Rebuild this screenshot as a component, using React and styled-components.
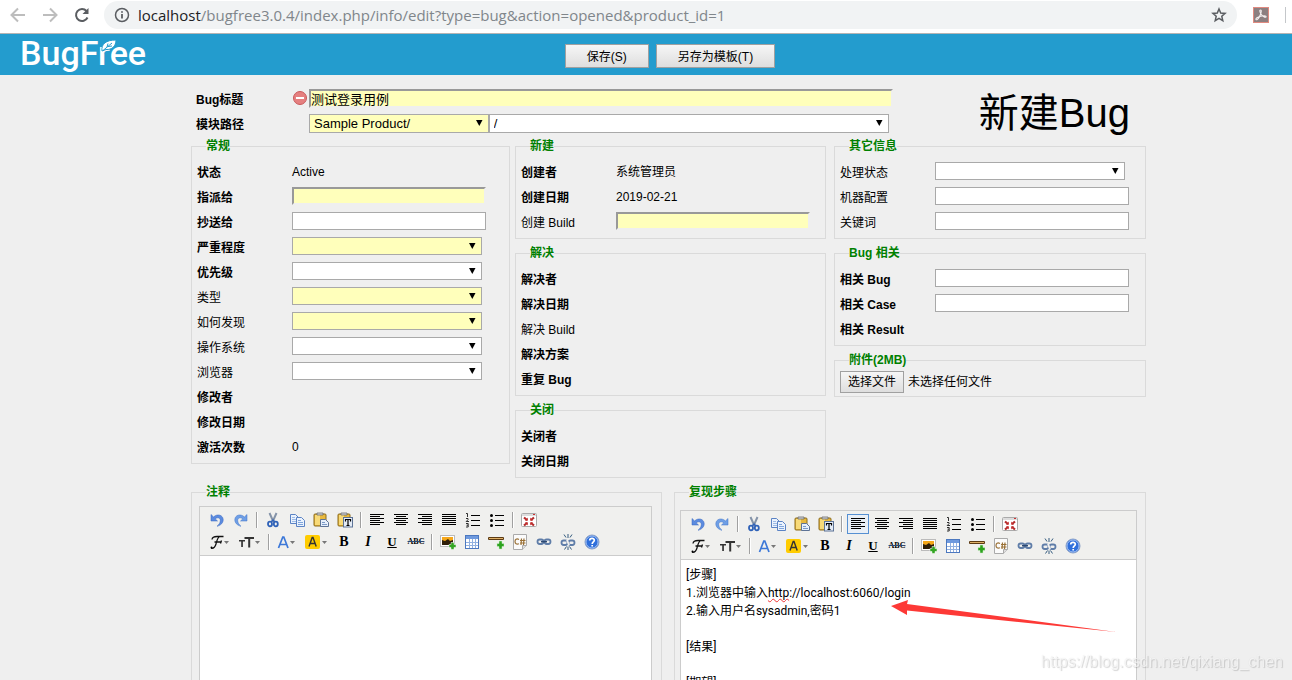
import React from 'react';
import styled, { createGlobalStyle, css } from 'styled-components';

const GlobalStyle = createGlobalStyle`
  *, *::before, *::after { box-sizing: border-box; }
  body {
    margin: 0;
    background: #efefef;
    color: #000;
    font: 12px/14px "Liberation Sans", "Noto Sans CJK SC", sans-serif;
  }
  button, input, select { font-family: inherit; color: inherit; }
`;

const Window = styled.div`
  height: 100vh;
  display: flex;
  flex-direction: column;
  overflow: hidden;
`;

/* browser bar */

const BrowserBar = styled.nav`
  flex: none;
  display: flex;
  align-items: center;
  height: 34px;
  padding: 1px 6px 4px 8px;
  background: #fff;
  border-bottom: 1px solid #b4b4b4;
`;

const NavButton = styled.button`
  width: 32px;
  height: 28px;
  padding: 0 0 0 2px;
  border: 0;
  background: none;
  display: flex;
  align-items: center;
  color: ${(p) => (p.$dim ? '#bdbdbd' : '#5a5d61')};
`;

const AddressPill = styled.div`
  flex: 1;
  min-width: 0;
  display: flex;
  align-items: center;
  height: 28px;
  padding: 0 10px;
  border-radius: 14px;
  background: #f1f3f4;
  color: #5a5d61;
  svg { flex: none; }
`;

const Address = styled.span`
  flex: 1;
  min-width: 0;
  margin-left: 8px;
  overflow: hidden;
  white-space: nowrap;
  font: 15px/24px "Open Sans", "Noto Sans", sans-serif;
  color: #80868b;
  b { font-weight: 400; color: #202124; }
`;

const Extension = styled.div`
  display: flex;
  align-items: center;
  gap: 16px;
  margin-left: 16px;
`;

const BarDivider = styled.span`
  width: 1px;
  height: 16px;
  background: #c4c7ca;
`;

/* header */

const Header = styled.header`
  flex: none;
  display: grid;
  grid-template-columns: minmax(0, 564fr) auto minmax(0, 516fr);
  align-items: center;
  height: 41px;
  background: #239cce;
`;

const Logo = styled.a`
  position: relative;
  justify-self: start;
  margin-left: 20px;
  padding-bottom: 3px;
  color: #fff;
  text-decoration: none;
  font: 500 34px/36px Roboto, sans-serif;
`;

const Leaf = styled.svg`
  position: absolute;
  left: 81px;
  top: 4px;
`;

const Actions = styled.div`
  display: flex;
  gap: 7px;
  margin-top: 3px;
`;

const ActionButton = styled.button`
  height: 24px;
  padding: 1px 21px 0;
  border: 1px solid #a0a0a0;
  border-radius: 0;
  background: linear-gradient(#f6f6f6, #dedede);
  font-size: 12px;
  line-height: 20px;
`;

/* form */

const Scroller = styled.main`
  flex: 1;
  min-height: 0;
  overflow-y: auto;
  scrollbar-width: none;
`;

const Form = styled.form`
  max-width: 1000px;
  margin: 0 auto;
  padding: 12px 0 24px 45px;
`;

const FormHead = styled.div`
  display: flex;
  padding: 0 16px 0 5px;
`;

const HeadFields = styled.div`
  flex: 1;
  min-width: 0;
`;

const HeadRow = styled.div`
  display: flex;
  align-items: flex-start;
  height: 25px;
`;

const HeadLabel = styled.label`
  flex: none;
  width: 97px;
  line-height: 27px;
  font-weight: 700;
`;

const StatusSlot = styled.span`
  flex: none;
  width: 16px;
  padding-top: 4px;
  line-height: 0;
`;

const PageTitle = styled.h1`
  margin: 0 0 0 86px;
  font-size: 40px;
  line-height: 52px;
  font-weight: 400;
  white-space: nowrap;
`;

const PathSelects = styled.div`
  flex: 1;
  display: flex;
  margin-right: 4px;
`;

const insetBorder = css`
  border: 2px solid;
  border-color: #999 #efefef #efefef #999;
  background: #ffffbb;
`;

const TextInput = styled.input`
  display: block;
  width: ${(p) => p.$width || '194px'};
  max-width: 100%;
  height: ${(p) => (p.$tall ? '19px' : '18px')};
  margin-top: 2px;
  padding: 0;
  border: 1px solid #a9a9a9;
  background: #fff;
  font-size: 13px;
  ${(p) => p.$required && insetBorder}
`;

const SelectBox = styled.span`
  position: relative;
  display: block;
  width: ${(p) => p.$width || '190px'};
  max-width: 100%;
  margin-top: 2px;
  select {
    display: block;
    width: 100%;
    height: ${(p) => (p.$tall ? '19px' : '18px')};
    padding: 0 20px 0 4px;
    appearance: none;
    border: 1px solid #a9a9a9;
    border-radius: 0;
    background: ${(p) => (p.$required ? '#ffffbb' : '#fff')};
    font-size: 13px;
  }
  svg {
    position: absolute;
    right: 6px;
    top: 5px;
    pointer-events: none;
  }
`;

const Columns = styled.div`
  display: grid;
  grid-template-columns: 319fr 311fr 315fr;
  column-gap: 5px;
  align-items: start;
`;

const Column = styled.div`
  min-width: 0;
  display: flex;
  flex-direction: column;
  gap: 7px;
  margin-left: ${(p) => (p.$last ? '3px' : '0')};
`;

const Panel = styled.fieldset`
  min-width: 0;
  margin: 0;
  padding: ${(p) => p.$pad || '7px 5px 3px'};
  border: 1px solid #dadada;
`;

const Legend = styled.legend`
  margin-left: ${(p) => p.$indent || '9px'};
  padding: 0;
  color: #008000;
  font-weight: 700;
  line-height: 14px;
`;

const Row = styled.div`
  display: flex;
  align-items: flex-start;
  height: 25px;
`;

const FieldLabel = styled.label`
  flex: none;
  width: 95px;
  line-height: 27px;
  font-weight: ${(p) => (p.$bold ? 700 : 400)};
`;

const Value = styled.output`
  line-height: 24px;
`;

const FileRow = styled.div`
  display: flex;
  align-items: center;
  gap: 4px;
  height: 23px;
  input {
    position: absolute;
    width: 1px;
    height: 1px;
    opacity: 0;
  }
`;

const FileButton = styled.label`
  height: 22px;
  padding: 0 7px;
  border: 1px solid #a0a0a0;
  background: linear-gradient(#f6f6f6, #dedede);
  line-height: 20px;
`;

/* editors */

const EditorGrid = styled.div`
  display: grid;
  grid-template-columns: 471fr 472fr;
  column-gap: 12px;
  margin-top: 7px;
`;

const EditorFrame = styled.div`
  position: relative;
  border: 1px solid #ccc;
  background: #fff;
`;

const Toolbar = styled.div`
  padding: 2px 5px;
  border-bottom: 1px solid #ccc;
  background: #f0f0ee;
`;

const ToolRow = styled.div`
  display: flex;
  align-items: center;
  height: 22px;
  overflow: hidden;
`;

const Tool = styled.button`
  flex: none;
  display: flex;
  align-items: center;
  justify-content: center;
  width: ${(p) => p.$width + 6}px;
  height: 20px;
  margin: 0 1px;
  padding: 0;
  border: 1px solid ${(p) => (p.$active ? '#5690d2' : 'transparent')};
  background: ${(p) => (p.$active ? '#e9eff6' : 'none')};
`;

const ToolDivider = styled.span`
  flex: none;
  width: 2px;
  height: 16px;
  margin: 0 3px;
  border-left: 1px solid #a0a0a0;
  border-right: 1px solid #fff;
`;

const EditorBody = styled.div`
  min-height: 200px;
  padding: 6px 5px;
  outline: 0;
  font: 12px/18px Roboto, "Noto Sans CJK SC", sans-serif;
  p { margin: 0; min-height: 18px; }
`;

const Misspelt = styled.span`
  text-decoration: underline wavy #e33 1px;
  text-underline-offset: 1px;
  text-decoration-skip-ink: none;
`;

const Pointer = styled.svg`
  position: absolute;
  left: 208px;
  top: 86px;
  pointer-events: none;
`;

const Watermark = styled.span`
  position: fixed;
  right: 9px;
  bottom: 8px;
  font: 16px/20px "Liberation Sans", sans-serif;
  color: rgba(255, 255, 255, 0.7);
  text-shadow: 1px 1px 1px rgba(0, 0, 0, 0.16), 0 0 1px rgba(0, 0, 0, 0.12);
  pointer-events: none;
`;

/* icons */

const lines = (rows) => rows.map(([x, w], i) => <rect key={i} x={x} y={2 + i * 2} width={w} height="1" />);
const Clipboard = () => (
  <>
    <rect x="1" y="2" width="12" height="12" rx="1" fill="#e9b93c" stroke="#8a6a1c" />
    <path d="M2 3h5v10H2z" fill="#f8da78" />
    <path d="M4 3V1h6v2z" fill="#d5d8de" stroke="#6b6b6b" strokeWidth=".8" />
  </>
);
const Caret = ({ x }) => <path d={`M${x} 7h5l-2.5 3z`} fill="#777" />;
const link = (
  <g fill="none" stroke="#5f7da8" strokeWidth="1.8">
    <rect x="1.5" y="5.5" width="6" height="4.5" rx="2.2" />
    <rect x="8.5" y="5.5" width="6" height="4.5" rx="2.2" />
  </g>
);

const GLYPHS = {
  undo: (
    <path d="M2 2.500V9h6.500L6.300 6.900C8.500 4.800 11.600 6 11.300 8.800 11.100 11 10 12.500 8 14.300c4-1 6.300-3.500 6.200-6.800C14 3 8.500 1.300 4.600 4.900z" fill="#5b8be0" stroke="#3565bd" strokeWidth=".5" />
  ),
  redo: (
    <path d="M14 2.500V9H7.500l2.200-2.100C7.500 4.800 4.400 6 4.700 8.800 4.900 11 6 12.500 8 14.300 4 13.300 1.700 10.800 1.800 7.500 2 3 7.500 1.300 11.400 4.900z" fill="#6f9fe6" stroke="#3f73c6" strokeWidth=".5" />
  ),
  cut: (
    <>
      <path d="M4.500 1l4 9M11.500 1l-4 9" stroke="#8493a8" strokeWidth="2" />
      <g fill="none" stroke="#2f62b8" strokeWidth="1.800">
        <ellipse cx="5" cy="12" rx="2" ry="2.300" />
        <ellipse cx="10.800" cy="12" rx="2" ry="2.300" />
      </g>
      <path d="M6 10l2-2 2 2" fill="none" stroke="#2f62b8" strokeWidth="1.500" />
    </>
  ),
  copy: (
    <g stroke="#5b83c4" fill="#eaf2fd">
      <path d="M1.500 2.500h5l3 3v6h-8z" />
      <path d="M3 5.500h3M3 7.500h4M3 9.500h4" stroke="#9dbbe6" />
      <path d="M7.500 5.500h5l3 3v6h-8z" />
      <path d="M9 8.500h3M9 10.500h5M9 12.500h5" stroke="#7fa5dc" />
    </g>
  ),
  paste: (
    <>
      <Clipboard />
      <path d="M7.500 7.500h5l3 3v4h-8z" fill="#e6effb" stroke="#5d7396" />
      <path d="M9 10.500h3M9 12.500h5" stroke="#7c9ac6" />
    </>
  ),
  plainpaste: (
    <>
      <Clipboard />
      <rect x="6.500" y="5.500" width="9" height="9.500" fill="#e3ebf6" stroke="#5d7396" />
      <path d="M8.500 9.500v-2h5v2M11 7.500v6M9.500 13.500h3" fill="none" stroke="#000" strokeWidth="1.200" />
    </>
  ),
  left: lines([[1, 14], [1, 10], [1, 14], [1, 10], [1, 14], [1, 10]]),
  center: lines([[1, 14], [3, 10], [1, 14], [3, 10], [1, 14], [3, 10]]),
  right: lines([[1, 14], [5, 10], [1, 14], [5, 10], [1, 14], [5, 10]]),
  full: lines([[1, 14], [1, 14], [1, 14], [1, 14], [1, 14], [1, 14]]),
  ol: (
    <>
      <path d="M6 3h9v1H6zM6 8h9v1H6zM6 13h9v1H6z" />
      <path d="M1 1.500h1.500V5M1 6.500h2v1.200L1.200 9.500H4M1 11.500h2.200v3.500H1M1.500 13.200h1.500" fill="none" stroke="#000" strokeWidth=".8" />
    </>
  ),
  ul: (
    <>
      <path d="M6 3h9v1H6zM6 8h9v1H6zM6 13h9v1H6z" />
      <circle cx="2.500" cy="3.500" r="1.500" /><circle cx="2.500" cy="8.500" r="1.500" /><circle cx="2.500" cy="13.500" r="1.500" />
    </>
  ),
  fullscreen: (
    <>
      <rect x=".5" y="1.500" width="15" height="13" rx="1" fill="#fff" stroke="#aaa" />
      <path d="M1 2h14v2H1z" fill="#ddd" /><path d="M12 2h2v1h-2z" fill="#c33" />
      <path d="M3 5.500l3 2.500M13 5.500L10 8M3 13.500l3-2.500M13 13.500l-3-2.500" stroke="#b52d2d" strokeWidth="2.200" />
      <path d="M6.800 5.500v3.200H4zM9.200 5.500v3.200H12zM6.800 13.500v-3.200H4zM9.200 13.500v-3.200H12z" fill="#c32d2d" />
    </>
  ),
  fontname: (
    <>
      <path d="M2 14.200c2.500.6 4-.9 5-4.200.9-3.200 1.500-6.500 3.500-7.500M3 5.500C3.300 3 5.500 2.500 8 2.500h6.500M5.500 8h6.500M12.500 6.500L11.500 9.500" fill="none" stroke="#111" strokeWidth="1.300" />
      <circle cx="2.500" cy="13.500" r="1" />
      <Caret x="15" />
    </>
  ),
  fontsize: (
    <>
      <path d="M1 6h6v1.500H4.900V13H3.200V7.500H1zM6.500 3H16v2h-3.800v8.500h-2V5H6.500z" fill="#333" />
      <Caret x="17" />
    </>
  ),
  forecolor: (
    <>
      <path d="M1.500 14L5.800 3h1L11 14M3 10.500h6.600" fill="none" stroke="#3c78d8" strokeWidth="1.700" />
      <Caret x="13" />
    </>
  ),
  hilite: (
    <>
      <rect x="0" y="1" width="15" height="14" rx="2" fill="#fc0" />
      <path d="M4 12.500l3.200-9H8l3.200 9M5 9.500h5.100" fill="none" stroke="#333" strokeWidth="1.400" />
      <Caret x="17" />
    </>
  ),
  image: (
    <>
      <rect x=".5" y="1.500" width="14" height="11" fill="#fff" stroke="#bbb" />
      <path d="M2 3h11v8H2z" fill="#2e1e08" />
      <path d="M2 3h11v3l-3 1-2-2-3 2-3-1z" fill="#f5a71a" />
      <path d="M11 8.500h3v2h2v3h-2v2h-3v-2H9v-3h2z" fill="#34a523" stroke="#fff" strokeWidth=".5" />
    </>
  ),
  table: (
    <>
      <rect x="1.500" y="1.500" width="13" height="13" fill="#fff" stroke="#4c78bf" />
      <path d="M2 2h12v3H2z" fill="#6f9ade" />
      <path d="M2 8.500h12M2 11.500h12M5.500 5v9M8.500 5v9M11.500 5v9" stroke="#92b1e0" />
    </>
  ),
  hr: (
    <>
      <rect x="0" y="3" width="16" height="3" rx="1" fill="#5d3b13" /><path d="M1 4h14v1H1z" fill="#dfb169" />
      <path d="M11 7h3v2.500h2v3h-2V15h-3v-2.500H9v-3h2z" fill="#2da31f" stroke="#d5efcf" strokeWidth=".5" />
    </>
  ),
  code: (
    <>
      <path d="M1.500.5h13v11l-4 4h-9z" fill="#fbfbfb" stroke="#aaa" /><path d="M14.500 11.500h-4v4" fill="#ddd" stroke="#aaa" />
      <path d="M7 5.500C4.500 4.200 3 5.500 3 7.500s1.500 3.300 4 2.200M9.500 4.500L9 11M12 4.500L11.500 11M8 6.500h5.500M8 9h5.500" fill="none" stroke="#9a7136" strokeWidth="1.200" />
    </>
  ),
  link: <>{link}<path d="M5 7.700h6" stroke="#2d4a73" strokeWidth="1.500" /></>,
  unlink: (
    <>
      <g transform="translate(0 1)">{link}</g>
      <path d="M7 6l2 5" stroke="#f0f0ee" strokeWidth="2" />
      <path d="M8 0v4M4 .5l2 3M12 .5l-2 3M8 12.500V16M4.500 15.500l2-3M11.500 15.500l-2-3" stroke="#345b7e" strokeWidth="1" />
    </>
  ),
  help: (
    <>
      <circle cx="8" cy="8" r="7" fill="#2f6fdb" stroke="#8a9fc4" /><circle cx="8" cy="8" r="6" fill="none" stroke="#b9d0f7" strokeWidth=".8" />
      <path d="M5.700 6.500C5.700 3.500 10.500 3.600 10.300 6.400 10.200 8 8.200 7.800 8.200 10M8.200 11v1.500" fill="none" stroke="#fff" strokeWidth="1.700" />
    </>
  ),
};

const Letter = styled.span`
  font: 700 ${(p) => p.$size || 13}px/16px "Liberation Serif", serif;
  font-style: ${(p) => (p.$italic ? 'italic' : 'normal')};
  text-decoration: ${(p) => p.$line || 'none'};
`;

const LETTERS = {
  bold: <Letter $size={14}>B</Letter>,
  italic: <Letter $size={14} $italic>I</Letter>,
  underline: <Letter $line="underline">U</Letter>,
  strike: <Letter $size={8} $line="line-through #2d4a73">ABC</Letter>,
};

const TOOLS = [
  [['undo', '后退'], ['redo', '前进'], null, ['cut', '剪切'], ['copy', '复制'], ['paste', '粘贴'], ['plainpaste', '粘贴为无格式文本'], null,
    ['left', '左对齐'], ['center', '居中'], ['right', '右对齐'], ['full', '两端对齐'], ['ol', '编号'], ['ul', '项目符号'], null, ['fullscreen', '全屏显示']],
  [['fontname', '字体', 21], ['fontsize', '文字大小', 23], null, ['forecolor', '文字颜色', 20], ['hilite', '文字背景', 23],
    ['bold', '粗体'], ['italic', '斜体'], ['underline', '下划线'], ['strike', '删除线'], null,
    ['image', '图片'], ['table', '表格'], ['hr', '横线'], ['code', '程序代码'], ['link', '超级链接'], ['unlink', '取消超级链接'], ['help', '关于']],
];

function Editor({ label, active, children }) {
  return (
    <EditorFrame>
      <Toolbar role="toolbar" aria-label={label}>
        {TOOLS.map((row, i) => (
          <ToolRow key={i}>
            {row.map((tool, j) => {
              if (!tool) return <ToolDivider key={j} />;
              const [name, title, width = 16] = tool;
              return (
                <Tool key={j} type="button" aria-label={title} title={title} $width={width} $active={active === name}>
                  {LETTERS[name] || <svg width={width} height="16" viewBox={`0 0 ${width} 16`}>{GLYPHS[name]}</svg>}
                </Tool>
              );
            })}
          </ToolRow>
        ))}
      </Toolbar>
      <EditorBody role="textbox" aria-multiline="true" aria-label={label} contentEditable suppressContentEditableWarning spellCheck={false}>
        {children}
      </EditorBody>
      {active && (
        <Pointer width="230" height="36" viewBox="0 0 230 36" aria-hidden="true">
          <path d="M2 9L19 3 18 7 227 35 18 13.500V18z" fill="#fd3936" />
        </Pointer>
      )}
    </EditorFrame>
  );
}

function Select({ id, options = [''], label, ...rest }) {
  return (
    <SelectBox {...rest}>
      <select id={id} aria-label={label}>
        {options.map((o) => <option key={o}>{o}</option>)}
      </select>
      <svg width="8" height="8" viewBox="0 0 8 8" aria-hidden="true"><path d="M1 1h6.500L4.300 7z" /></svg>
    </SelectBox>
  );
}

function Field({ id, label, bold, kind, required, value }) {
  return (
    <Row>
      <FieldLabel htmlFor={kind || value ? id : undefined} $bold={bold}>{label}</FieldLabel>
      {kind === 'text' && <TextInput id={id} $required={required} />}
      {kind === 'select' && <Select id={id} $required={required} />}
      {value && <Value id={id}>{value}</Value>}
    </Row>
  );
}

function Group({ title, fields }) {
  return (
    <Panel>
      <Legend>{title}</Legend>
      {fields.map((f) => <Field key={f.id} {...f} />)}
    </Panel>
  );
}

const GENERAL = [
  { id: 'status', label: '状态', bold: true, value: 'Active' },
  { id: 'assign', label: '指派给', bold: true, kind: 'text', required: true },
  { id: 'cc', label: '抄送给', bold: true, kind: 'text' },
  { id: 'severity', label: '严重程度', bold: true, kind: 'select', required: true },
  { id: 'priority', label: '优先级', bold: true, kind: 'select' },
  { id: 'type', label: '类型', kind: 'select', required: true },
  { id: 'found', label: '如何发现', kind: 'select', required: true },
  { id: 'os', label: '操作系统', kind: 'select' },
  { id: 'browser', label: '浏览器', kind: 'select' },
  { id: 'modifier', label: '修改者', bold: true },
  { id: 'modified', label: '修改日期', bold: true },
  { id: 'reopened', label: '激活次数', bold: true, value: '0' },
];
const CREATED = [
  { id: 'creator', label: '创建者', bold: true, value: '系统管理员' },
  { id: 'created', label: '创建日期', bold: true, value: '2019-02-21' },
  { id: 'build', label: '创建 Build', kind: 'text', required: true },
];
const RESOLVED = [
  { id: 'resolver', label: '解决者', bold: true },
  { id: 'resolved', label: '解决日期', bold: true },
  { id: 'rbuild', label: '解决 Build' },
  { id: 'solution', label: '解决方案', bold: true },
  { id: 'duplicate', label: '重复 Bug', bold: true },
];
const CLOSED = [
  { id: 'closer', label: '关闭者', bold: true },
  { id: 'closed', label: '关闭日期', bold: true },
];
const OTHER = [
  { id: 'handling', label: '处理状态', kind: 'select' },
  { id: 'machine', label: '机器配置', kind: 'text' },
  { id: 'keywords', label: '关键词', kind: 'text' },
];
const RELATED = [
  { id: 'rbug', label: '相关 Bug', bold: true, kind: 'text' },
  { id: 'rcase', label: '相关 Case', bold: true, kind: 'text' },
  { id: 'rresult', label: '相关 Result', bold: true },
];

export default function App() {
  return (
    <Window>
      <GlobalStyle />
      <BrowserBar>
        <NavButton $dim aria-label="Back">
          <svg width="16" height="16" fill="none" stroke="currentColor" strokeWidth="2"><path d="M15 8H2M8 1.500L1.500 8 8 14.500" /></svg>
        </NavButton>
        <NavButton $dim aria-label="Forward">
          <svg width="16" height="16" fill="none" stroke="currentColor" strokeWidth="2"><path d="M1 8h13M8 1.500L14.500 8 8 14.500" /></svg>
        </NavButton>
        <NavButton aria-label="Reload">
          <svg width="16" height="16" fill="none" stroke="currentColor" strokeWidth="2"><path d="M13.500 10.500A6 6 0 1 1 12.500 4" /><path d="M14.500 1v6h-6z" fill="currentColor" stroke="none" /></svg>
        </NavButton>
        <AddressPill>
          <svg width="16" height="16" fill="none" stroke="currentColor" strokeWidth="1.500"><circle cx="8" cy="8" r="6.500" /><path d="M8 7v4.500M8 4.200v1.600" strokeWidth="1.800" /></svg>
          <Address><b>localhost</b>/bugfree3.0.4/index.php/info/edit?type=bug&amp;action=opened&amp;product_id=1</Address>
          <svg width="16" height="16" fill="none" stroke="currentColor" strokeWidth="1.500"><path d="M8 2l1.700 4 4.400.4-3.300 2.900 1 4.300L8 11.300l-3.800 2.300 1-4.300L1.900 6.400 6.300 6z" /></svg>
        </AddressPill>
        <Extension>
          <svg width="16" height="16"><rect x=".5" y=".5" width="15" height="15" fill="#8c7f80" stroke="#e08a80" /><path d="M7.500 3c1.500 0 .5 3-.5 5.500S4 13.500 3 12.500 6 9.500 9 9s4.500 0 4 1-3.500-.5-5-3S6.500 3 7.500 3z" fill="none" stroke="#f4eeee" strokeWidth="1.100" /></svg>
          <BarDivider />
        </Extension>
      </BrowserBar>

      <Header>
        <Logo href="#">
          BugFree
          <Leaf width="16" height="13" viewBox="0 0 16 13" aria-hidden="true">
            <path d="M1 12C0 5 5 1 15 1c0 6-4 10-10 9.500z" fill="#fff" stroke="#239cce" />
            <path d="M2 11.500L11 4M6 8l1-3.500M7 7.500l4-.5" fill="none" stroke="#239cce" strokeWidth="1" />
          </Leaf>
        </Logo>
        <Actions>
          <ActionButton type="submit" form="bug-form">保存(S)</ActionButton>
          <ActionButton type="button">另存为模板(T)</ActionButton>
        </Actions>
      </Header>

      <Scroller>
        <Form id="bug-form" onSubmit={(e) => e.preventDefault()}>
          <FormHead>
            <HeadFields>
              <HeadRow>
                <HeadLabel htmlFor="title">Bug标题</HeadLabel>
                <StatusSlot>
                  <svg width="14" height="14"><circle cx="7" cy="7" r="6.500" fill="#e58080" stroke="#c9595b" /><rect x="3" y="6" width="8" height="2" fill="#fff" /></svg>
                </StatusSlot>
                <TextInput id="title" $required $tall $width="100%" defaultValue="测试登录用例" />
              </HeadRow>
              <HeadRow>
                <HeadLabel htmlFor="product">模块路径</HeadLabel>
                <StatusSlot />
                <PathSelects>
                  <Select id="product" options={['Sample Product/']} $required $tall $width="31%" />
                  <Select id="module" label="模块" options={['/']} $tall $width="69%" />
                </PathSelects>
              </HeadRow>
            </HeadFields>
            <PageTitle>新建Bug</PageTitle>
          </FormHead>

          <Columns>
            <Column>
              <Group title="常规" fields={GENERAL} />
            </Column>
            <Column>
              <Group title="新建" fields={CREATED} />
              <Group title="解决" fields={RESOLVED} />
              <Group title="关闭" fields={CLOSED} />
            </Column>
            <Column $last>
              <Group title="其它信息" fields={OTHER} />
              <Group title="Bug 相关" fields={RELATED} />
              <Panel $pad="3px 5px">
                <Legend>附件(2MB)</Legend>
                <FileRow>
                  <input id="attachment" type="file" />
                  <FileButton htmlFor="attachment">选择文件</FileButton>
                  <span>未选择任何文件</span>
                </FileRow>
              </Panel>
            </Column>
          </Columns>

          <EditorGrid>
            <Panel $pad="7px 9px 9px 7px">
              <Legend $indent="7px">注释</Legend>
              <Editor label="注释" />
            </Panel>
            <Panel $pad="11px 8px 9px 5px">
              <Legend>复现步骤</Legend>
              <Editor label="复现步骤" active="left">
                <p>[步骤]</p>
                <p>1.浏览器中输入<Misspelt>http</Misspelt>://localhost:6060/login</p>
                <p>2.输入用户名sysadmin,密码1</p>
                <p />
                <p>[结果]</p>
                <p />
                <p>[期望]</p>
              </Editor>
            </Panel>
          </EditorGrid>
        </Form>
      </Scroller>
      <Watermark>https://blog.csdn.net/qixiang_chen</Watermark>
    </Window>
  );
}
